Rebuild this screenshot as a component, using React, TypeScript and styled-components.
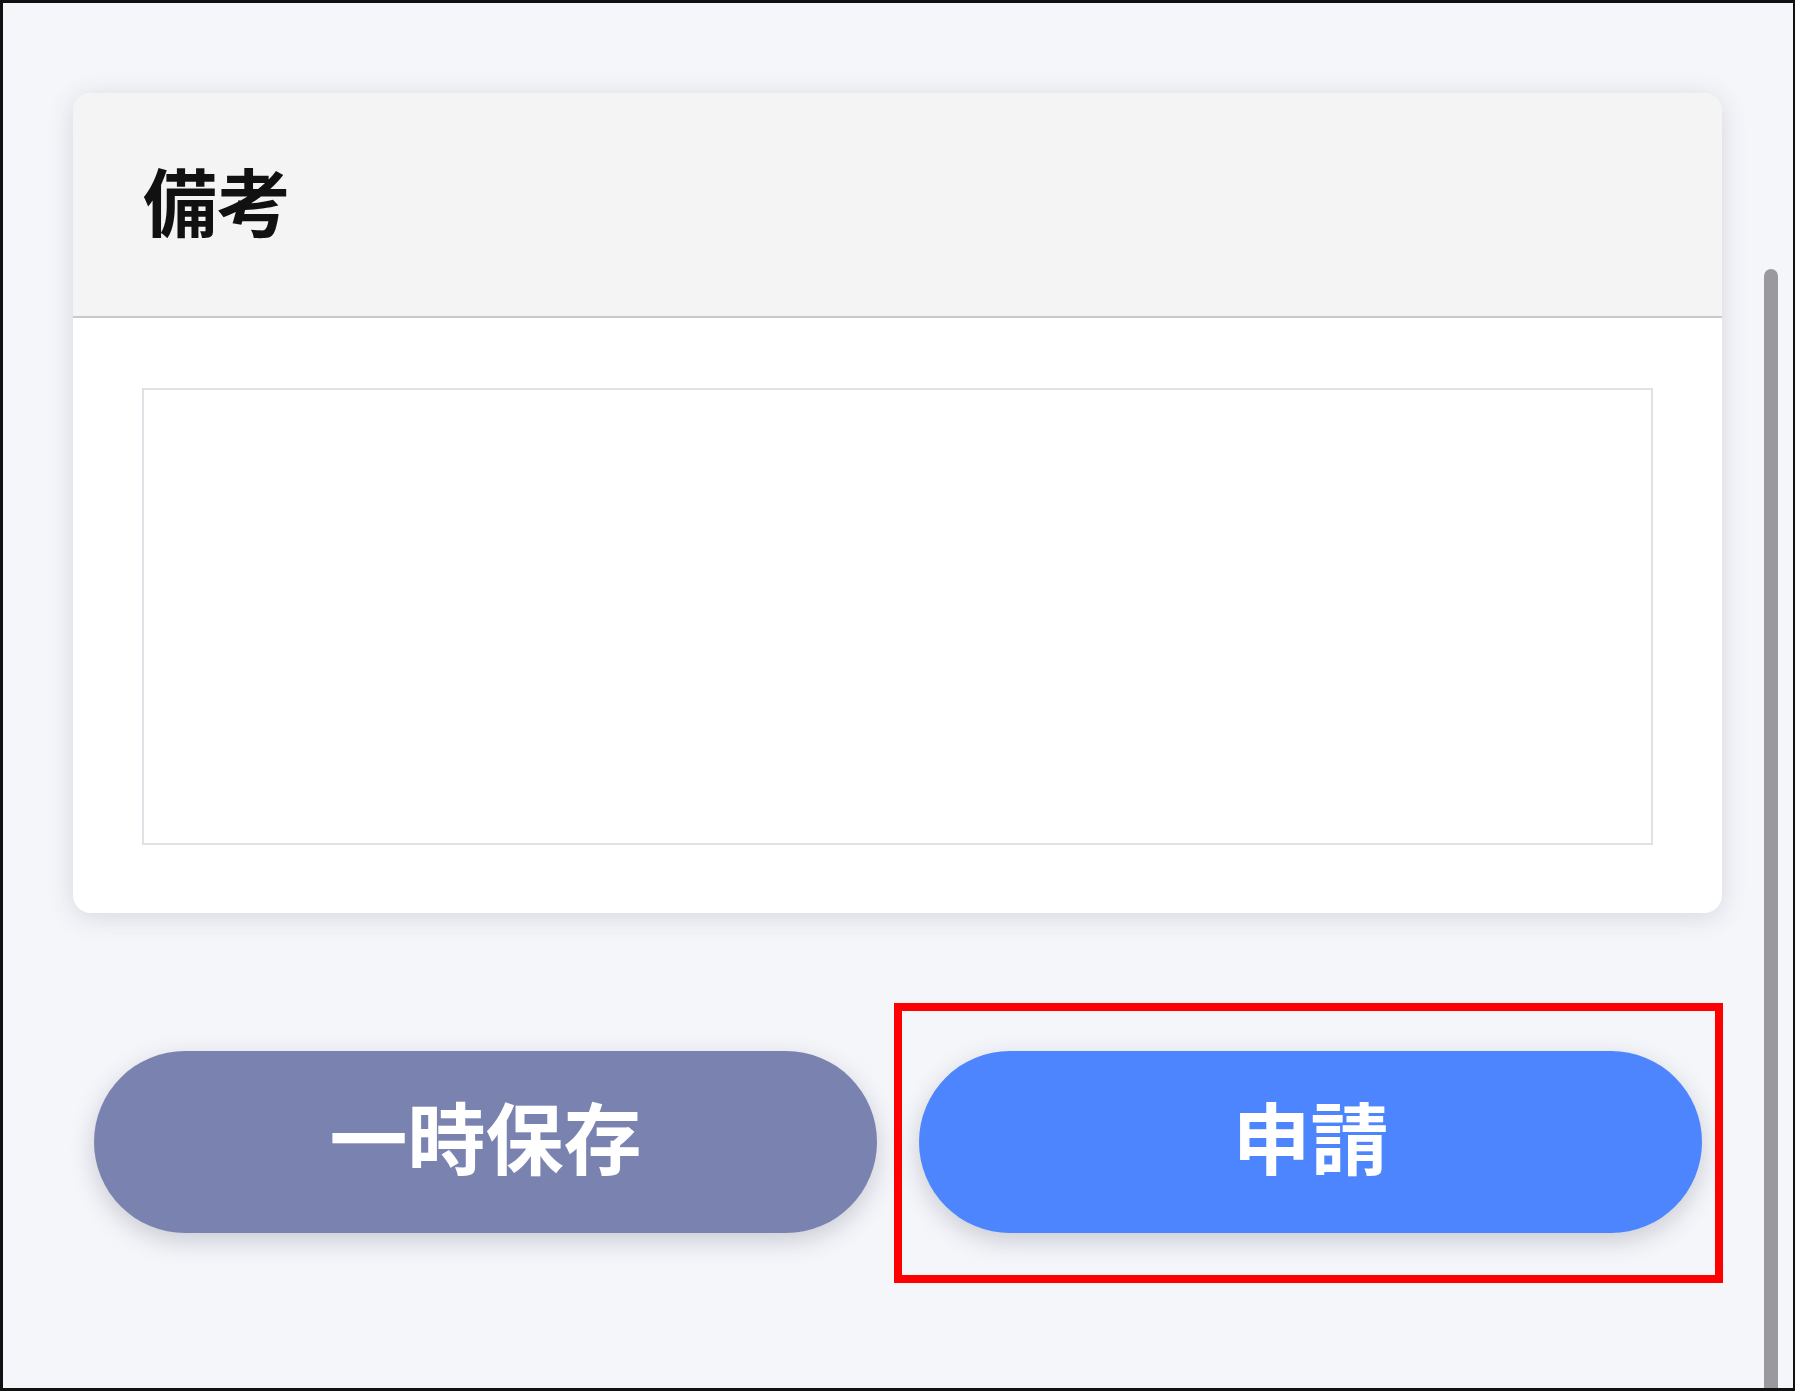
import React from "react";
import styled, { createGlobalStyle } from "styled-components";

const GlobalStyle = createGlobalStyle`
  html, body {
    margin: 0;
    padding: 0;
    background: #f5f6fa;
  }
  * { box-sizing: border-box; }
  body {
    font-family: "Noto Sans CJK JP", "Noto Sans", sans-serif;
  }
`;

const Frame = styled.div`
  position: relative;
  width: 1795px;
  height: 1391px;
  border: 3px solid #111;
  border-right-width: 2px;
  background: #f5f6fa;
  padding: 90px 70px 0 70px;
  overflow: hidden;
`;

const Card = styled.section`
  width: 1649px;
  background: #ffffff;
  border-radius: 18px;
  box-shadow: 0 4px 26px rgba(60, 64, 90, 0.16);
  overflow: hidden;
`;

const CardHeader = styled.header`
  height: 225px;
  background: #f4f4f4;
  border-bottom: 2px solid #c9c9cb;
  display: flex;
  align-items: center;
  padding: 0 70px 12px 70px;
`;

const Title = styled.h2`
  margin: 0;
  font-size: 74px;
  font-weight: 700;
  color: #111;
  line-height: 1;
`;

const CardBody = styled.div`
  padding: 70px 69px 68px 69px;
`;

const NoteArea = styled.textarea`
  display: block;
  width: 100%;
  height: 457px;
  border: 2px solid #dfe1e6;
  border-radius: 0;
  resize: none;
  outline: none;
  background: #fff;
  font-family: inherit;
  font-size: 28px;
`;

const ButtonRow = styled.div`
  display: flex;
  gap: 42px;
  margin-top: 138px;
  padding: 0 20px 0 21px;
  width: 1649px;
`;

const PillButton = styled.button<{ $tone: "save" | "apply"; $highlight?: boolean }>`
  position: relative;
  flex: 1;
  height: 182px;
  border: none;
  border-radius: 91px;
  background: ${(p) => (p.$tone === "save" ? "#7a83b0" : "#4c85fd")};
  color: #ffffff;
  font-family: "Noto Sans CJK JP", "Noto Sans", sans-serif;
  font-size: 78px;
  font-weight: 700;
  line-height: 1;
  padding: 0 0 14px 0;
  box-shadow: 0 8px 24px rgba(50, 55, 80, 0.22);
  display: flex;
  align-items: center;
  justify-content: center;
  cursor: pointer;

  ${(p) =>
    p.$highlight
      ? `
    &::after {
      content: "";
      position: absolute;
      top: -48px;
      bottom: -50px;
      left: -25px;
      right: -21px;
      border: 8px solid #ff0000;
      pointer-events: none;
    }
  `
      : ""}
`;

const ScrollThumb = styled.div`
  position: absolute;
  top: 266px;
  bottom: -10px;
  right: 15px;
  width: 14px;
  border-radius: 7px;
  background: #9a999e;
`;

export default function App() {
  return (
    <>
      <GlobalStyle />
      <Frame>
        <Card>
          <CardHeader>
            <Title>備考</Title>
          </CardHeader>
          <CardBody>
            <NoteArea aria-label="備考" />
          </CardBody>
        </Card>
        <ButtonRow>
          <PillButton $tone="save">一時保存</PillButton>
          <PillButton $tone="apply" $highlight>
            申請
          </PillButton>
        </ButtonRow>
        <ScrollThumb />
      </Frame>
    </>
  );
}
